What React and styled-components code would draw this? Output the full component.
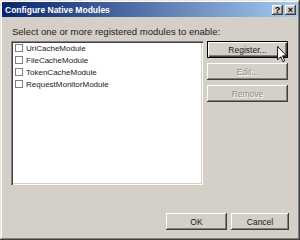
import React from "react";
import styled, { createGlobalStyle } from "styled-components";

const modules = ["UriCacheModule", "FileCacheModule", "TokenCacheModule", "RequestMonitorModule"];

const App = () => {
  return (
    <>
      <Global />
      <Window>
        <TitleBar>
          <Title>Configure Native Modules</Title>
          <CaptionButton>?</CaptionButton>
          <CaptionButton>×</CaptionButton>
        </TitleBar>
        <Body>
          <Label>Select one or more registered modules to enable:</Label>
          <Main>
            <ListBox>
              {modules.map((m) => (
                <Item key={m}>
                  <Check />
                  <span>{m}</span>
                </Item>
              ))}
            </ListBox>
            <SideButtons>
              <Button $default>Register...</Button>
              <Button disabled>Edit...</Button>
              <Button disabled>Remove</Button>
            </SideButtons>
          </Main>
          <Footer>
            <Button $w={61}>OK</Button>
            <Button $w={58}>Cancel</Button>
          </Footer>
        </Body>
        <Cursor viewBox="0 0 12 19" width="11" height="17">
          <path d="M0.5 0.5 L0.5 15.5 L4 12 L6.5 17.5 L8.5 16.5 L6 11 L10.5 11 Z" fill="#fff" stroke="#000" strokeWidth="1" />
        </Cursor>
      </Window>
    </>
  );
};

export default App;

const Global = createGlobalStyle`
  html, body { margin: 0; padding: 0; background: #d4d0c8; }
  body { font-family: "Liberation Sans", Arial, sans-serif; }
`;

const Window = styled.div`
  position: relative;
  width: 300px;
  height: 240px;
  box-sizing: border-box;
  background: #d4d0c8;
  padding: 2px;
  box-shadow: inset -1px -1px 0 #404040, inset 1px 1px 0 #e8e6e0, inset -2px -2px 0 #808080, inset 2px 2px 0 #ffffff;
  display: flex;
  flex-direction: column;
  overflow: hidden;
`;

const TitleBar = styled.div`
  height: 15px;
  background: linear-gradient(to right, #0a246a, #a6caf0);
  display: flex;
  align-items: center;
  padding: 0 2px 0 3px;
  gap: 2px;
`;

const Title = styled.div`
  flex: 1;
  color: #fff;
  font-weight: bold;
  font-size: 8.5px;
`;

const CaptionButton = styled.div`
  width: 11px;
  height: 10px;
  box-sizing: border-box;
  background: #d4d0c8;
  box-shadow: inset -1px -1px 0 #404040, inset 1px 1px 0 #fff, inset -2px -2px 0 #808080;
  font-size: 9px;
  font-weight: bold;
  line-height: 10px;
  text-align: center;
  color: #000;
`;

const Body = styled.div`
  flex: 1;
  display: flex;
  flex-direction: column;
  padding: 9px 9px 8px 9px;
`;

const Label = styled.div`
  font-size: 9.5px;
  color: #1a1a1a;
  height: 15px;
  line-height: 11px;
  padding-left: 1px;
`;

const Main = styled.div`
  display: flex;
  gap: 4px;
  height: 144px;
`;

const ListBox = styled.div`
  width: 192px;
  box-sizing: border-box;
  background: #fff;
  padding: 1px 4px;
  box-shadow: inset 1px 1px 0 #808080, inset 2px 2px 0 #404040, inset -1px -1px 0 #fff, inset -2px -2px 0 #d4d0c8;
`;

const Item = styled.div`
  display: flex;
  align-items: center;
  gap: 3px;
  height: 12px;
  font-size: 8px;
  color: #1a1a1a;
`;

const Check = styled.span`
  width: 8px;
  height: 8px;
  box-sizing: border-box;
  border: 1px solid #7f7f7f;
  background: #fff;
`;

const SideButtons = styled.div`
  display: flex;
  flex-direction: column;
  gap: 5px;
`;

const Button = styled.button`
  width: ${(p) => (p.$w ? p.$w : 81)}px;
  height: 17px;
  padding: 0;
  border: none;
  background: #d4d0c8;
  font-family: "Liberation Sans", Arial, sans-serif;
  font-size: 8.5px;
  color: #1a1a1a;
  box-shadow: ${(p) =>
    p.$default
      ? "inset 0 0 0 1px #000, inset 1px 1px 0 1px #fff, inset -2px -2px 0 0 #404040, inset -3px -3px 0 0 #808080"
      : "inset -1px -1px 0 #404040, inset 1px 1px 0 #fff, inset -2px -2px 0 #808080"};
  &:disabled {
    color: #8a8a8a;
    text-shadow: 1px 1px 0 #fff;
  }
`;

const Footer = styled.div`
  margin-top: auto;
  display: flex;
  justify-content: flex-end;
  gap: 4px;
`;

const Cursor = styled.svg`
  position: absolute;
  left: 277px;
  top: 46px;
`;
